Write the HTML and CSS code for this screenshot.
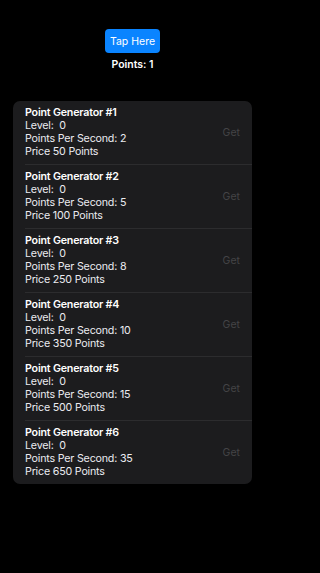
FILE: index.html
```html
<!DOCTYPE html>
<html>
<head>
<meta charset="utf-8">
<link rel="stylesheet" href="styles.css">
</head>
<body>
<div class="top">
  <button class="tap">Tap Here</button>
  <div class="points">Points: 1</div>
</div>
<div class="card">
  <div class="row"><div class="info"><div class="title">Point Generator #1</div><div>Level:&nbsp; 0</div><div>Points Per Second: 2</div><div>Price 50 Points</div></div><div class="get">Get</div></div>
  <div class="row"><div class="info"><div class="title">Point Generator #2</div><div>Level:&nbsp; 0</div><div>Points Per Second: 5</div><div>Price 100 Points</div></div><div class="get">Get</div></div>
  <div class="row"><div class="info"><div class="title">Point Generator #3</div><div>Level:&nbsp; 0</div><div>Points Per Second: 8</div><div>Price 250 Points</div></div><div class="get">Get</div></div>
  <div class="row"><div class="info"><div class="title">Point Generator #4</div><div>Level:&nbsp; 0</div><div>Points Per Second: 10</div><div>Price 350 Points</div></div><div class="get">Get</div></div>
  <div class="row"><div class="info"><div class="title">Point Generator #5</div><div>Level:&nbsp; 0</div><div>Points Per Second: 15</div><div>Price 500 Points</div></div><div class="get">Get</div></div>
  <div class="row"><div class="info"><div class="title">Point Generator #6</div><div>Level:&nbsp; 0</div><div>Points Per Second: 35</div><div>Price 650 Points</div></div><div class="get">Get</div></div>
</div>
</body>
</html>
```
FILE: styles.css
```css
html, body {
  margin: 0;
  padding: 0;
  background: #000;
  color: #fff;
  font-family: Inter, "Noto Sans", sans-serif;
  width: 265px;
  height: 573px;
  overflow: hidden;
}
.top {
  display: flex;
  flex-direction: column;
  align-items: center;
  padding-top: 29px;
}
.tap {
  width: 55px;
  height: 24px;
  border: none;
  border-radius: 4px;
  background: #0a84ff;
  color: #fff;
  font-family: inherit;
  font-size: 10.5px;
  padding: 0;
}
.points {
  margin-top: 6px;
  font-size: 10.5px;
  font-weight: 600;
  line-height: 12px;
}
.card {
  margin: 30px 13px 0 13px;
  background: #1c1c1e;
  border-radius: 7px;
  padding-left: 12px;
}
.row {
  display: flex;
  align-items: center;
  height: 63px;
  border-bottom: 1px solid #2c2c2e;
  padding-right: 12px;
}
.row:last-child {
  border-bottom: none;
}
.info {
  flex: 1;
  font-size: 10.7px;
  line-height: 12.8px;
  letter-spacing: -0.2px;
  color: #ebebf0;
  padding-top: 1px;
}
.title {
  font-weight: 600;
  color: #fff;
}
.get {
  font-size: 10.5px;
  color: #444446;
}
```
